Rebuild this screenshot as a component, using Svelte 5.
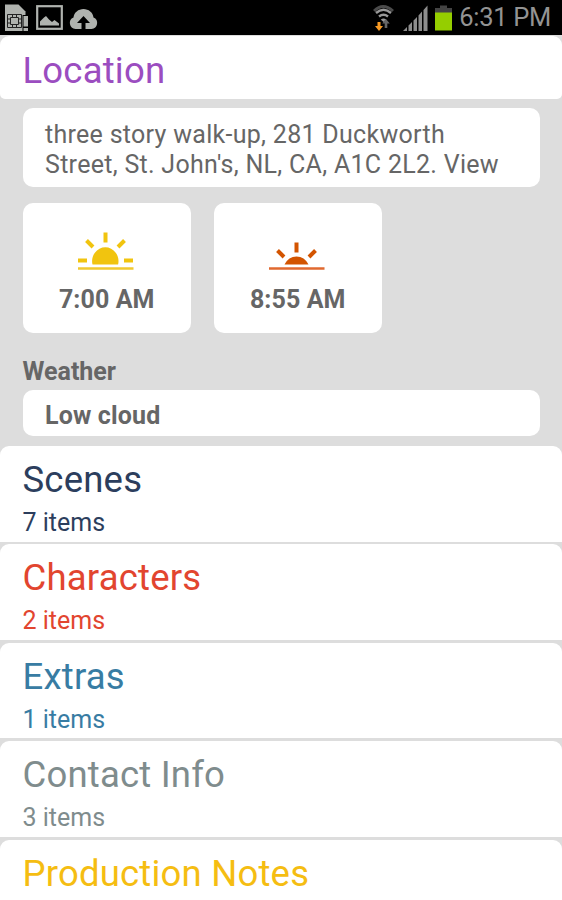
<script lang="ts">
  interface Section {
    title: string;
    count?: number;
    tone: string;
  }

  const address = "three story walk-up, 281 Duckworth Street, St. John's, NL, CA, A1C 2L2. View";
  const sunrise = '7:00 AM';
  const sunset = '8:55 AM';
  const weather = 'Low cloud';

  const sections: Section[] = [
    { title: 'Scenes', count: 7, tone: 'navy' },
    { title: 'Characters', count: 2, tone: 'red' },
    { title: 'Extras', count: 1, tone: 'blue' },
    { title: 'Contact Info', count: 3, tone: 'gray' },
    { title: 'Production Notes', tone: 'yellow' }
  ];
</script>

<div class="screen">
  <header class="status-bar">
    <div class="status-left">
      <svg width="26" height="28" viewBox="0 0 26 28">
        <path d="M1 0.500h13.500l7 7V27H1z" fill="#b0b3af" />
        <path d="M18.500 11h6v17h-6z" fill="#000" />
        <path d="M19.500 12H24v10.500h-4.500zM19.500 24H24v3h-4.500z" fill="#b0b3af" />
        <path d="M3.500 10.500h14v13h-14z" fill="#b0b3af" stroke="#222" />
        <path d="M6.500 13.500h8v7h-8zM8.500 10.500v3M12.500 10.500v3M8.500 20.500v3M12.500 20.500v3M3.500 15h3M3.500 19h3M14.500 15h3M14.500 19h3" fill="none" stroke="#222" />
      </svg>
      <svg width="27" height="25" viewBox="0 0 27 25">
        <rect x="1.200" y="1.200" width="24.600" height="22.600" fill="none" stroke="#b0b3af" stroke-width="2.200" />
        <path d="M4 20.500v-4l4-4 2-1.500 3 3.500 3 2.500 2.500-2 4.500 3.500v2z" fill="#b0b3af" />
      </svg>
      <svg class="cloud" width="29" height="22" viewBox="0 0 29 22">
        <path d="M6.500 21A6 6 0 0 1 4.500 9.500C5 4.500 9.500 1 14.500 1s9.500 3.500 10 8.500a6 6 0 0 1-2 11.500z" fill="#b0b3af" />
        <path d="M14.500 8l6.500 7h-4.500v7h-4v-7H8z" fill="#000" />
      </svg>
    </div>
    <div class="status-right">
      <svg width="24" height="28" viewBox="0 0 24 28">
        <path d="M1 6Q11 -4 22 6L20 8Q11 0 3.200 8z" fill="#4b4b4b" />
        <path d="M4 9Q11.500 2.500 19 9M7 12.500q4.500-3.500 9 0" fill="none" stroke="#999" stroke-width="2.400" />
        <path d="M8.800 15.500q2.700-2 5.400 0L11.500 18z" fill="#999" />
        <path d="M12.700 24v-4.500h-2.500L14 15l3.800 4.500h-2.500V24z" fill="#666" />
        <path d="M5.500 18h3v4H11l-4 5-4-5h2.500z" fill="#f79a24" />
      </svg>
      <svg class="signal" width="26" height="26" viewBox="0 0 26 26">
        <path d="M0 26l4-4v4zM5.500 26v-5.500L9 17v9zM10.500 26V15.500L14 12v14zM15.500 26V10.500L19 6.500V26zM20.500 26V5L24.500 0.500V26z" fill="#8d8d8d" />
      </svg>
      <svg class="battery" width="17" height="26" viewBox="0 0 17 26">
        <path d="M0 8V3h5V0.500h7V3h5v5z" fill="#444" />
        <path d="M0 7.500h17v18H0z" fill="#95ce00" />
      </svg>
      <span class="clock">6:31 PM</span>
    </div>
  </header>

  <section class="card location">
    <h2>Location</h2>
  </section>

  <div class="details">
    <div class="box address">{address}</div>

    <div class="sun-row">
      <div class="box sun">
        <svg width="60" height="42" viewBox="0 0 60 42">
          <path d="M16.500 33.500a13.200 13.800 0 1 1 25.600 0z" fill="#f1c40f" />
          <path d="M29.500 1.500v10M10.500 9.500l6.500 6.500M48.500 9.500l-6.500 6.500M2 29.500h9M48 29.500h9" fill="none" stroke="#f1c40f" stroke-width="4" />
          <path d="M2 37.500h55.500" stroke="#f1c92f" stroke-width="2.400" />
        </svg>
        <span>{sunrise}</span>
      </div>
      <div class="box sun">
        <svg width="60" height="42" viewBox="0 0 60 42">
          <path d="M17.500 33.500q4-8 12-8t12 8z" fill="#d35400" />
          <path d="M29.500 11.500v10M10.500 19.500l6.500 6.500M48.500 19.500l-6.500 6.500" fill="none" stroke="#d35400" stroke-width="4" />
          <path d="M2 37.500h55.500" stroke="#e0692f" stroke-width="2.400" />
        </svg>
        <span>{sunset}</span>
      </div>
    </div>

    <div class="label">Weather</div>
    <div class="box weather">{weather}</div>
  </div>

  <div class="sections">
    {#each sections as section}
      <section class="card {section.tone}">
        <h2>{section.title}</h2>
        {#if section.count}
          <p>{section.count} items</p>
        {/if}
      </section>
    {/each}
  </div>
</div>

<style>
  :global(body) {
    margin: 0;
    background: #ddd;
  }

  .screen {
    width: 562px;
    height: 900px;
    overflow: hidden;
    background: #ddd;
    font-family: Roboto, sans-serif;
    color: #666;
  }

  .status-bar {
    display: flex;
    justify-content: space-between;
    height: 35px;
    box-sizing: border-box;
    padding: 0 11px 0 4px;
    background: #000;
  }

  .status-left,
  .status-right {
    display: flex;
    align-items: center;
  }

  .status-left {
    gap: 6px;
  }

  .cloud {
    margin-top: 3px;
  }

  .signal {
    margin-left: 7px;
  }

  .battery {
    margin: 0 7px 0 6px;
  }

  .clock {
    font-size: 25.500px;
    line-height: 35px;
    color: #939393;
    letter-spacing: -0.300px;
  }

  .card {
    box-sizing: border-box;
    height: 95.6px;
    padding: 11px 22.500px 0;
    border-radius: 9px 9px 0 0;
    background: #fff;
  }

  .location {
    height: 62.500px;
    margin-top: 1px;
    padding-top: 12px;
    border-radius: 9px 9px 5px 5px;
    color: #9b4dc0;
  }

  h2 {
    margin: 0;
    font-size: 36.500px;
    font-weight: 400;
    line-height: 46px;
    letter-spacing: 0.2px;
  }

  p {
    margin: 5px 0 0;
    font-size: 25px;
    line-height: 30px;
    letter-spacing: 0;
  }

  .details {
    padding: 9.500px 22.500px 10px;
  }

  .box {
    box-sizing: border-box;
    border-radius: 10px;
    background: #fff;
  }

  .address {
    height: 79px;
    padding: 12px 22px 0 22.500px;
    font-size: 25px;
    line-height: 29.500px;
    letter-spacing: 0.29px;
  }

  .sun-row {
    display: flex;
    gap: 22.500px;
    margin-top: 16px;
  }

  .sun {
    display: flex;
    flex-direction: column;
    align-items: center;
    width: 168.500px;
    height: 130px;
    padding-top: 27.500px;
    font-size: 25px;
    font-weight: 700;
    line-height: 30px;
  }

  .sun svg {
    margin-left: -1px;
  }

  .sun span {
    margin-top: 12px;
    letter-spacing: 0.1px;
  }

  .label {
    margin-top: 23.500px;
    font-size: 25px;
    font-weight: 700;
    line-height: 30px;
  }

  .weather {
    height: 46px;
    margin-top: 3.500px;
    padding: 11px 22.500px 0;
    font-size: 25px;
    font-weight: 700;
    line-height: 30px;
    letter-spacing: 0.15px;
  }

  .sections {
    display: flex;
    flex-direction: column;
    gap: 2.800px;
  }

  .navy {
    color: #2c3e5d;
  }

  .red {
    color: #e2452f;
  }

  .blue {
    color: #387ca3;
  }

  .gray {
    color: #7f8c8d;
  }

  .yellow {
    color: #f5bd12;
  }
</style>
